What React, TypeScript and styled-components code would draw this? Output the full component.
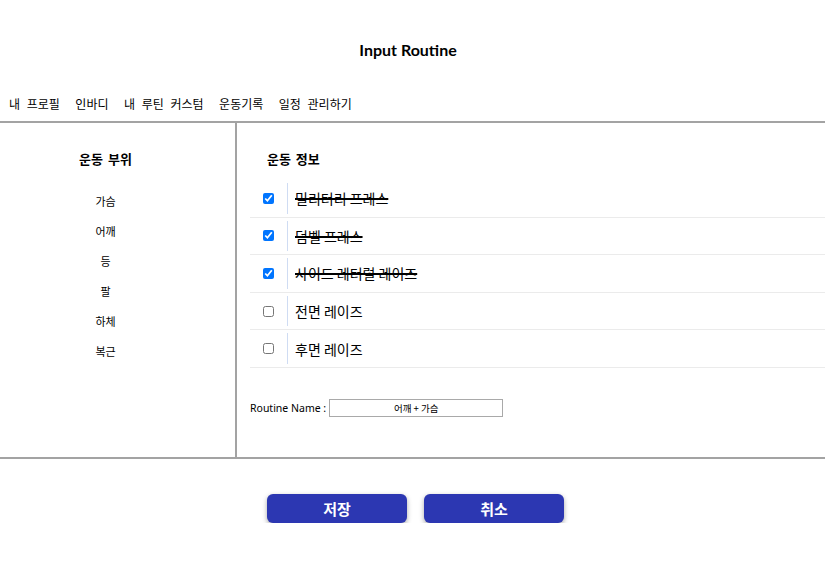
import React, { useState } from "react";
import styled, { createGlobalStyle } from "styled-components";

const Global = createGlobalStyle`
  html, body { margin: 0; padding: 0; background: #fff; }
  body { font-family: "Noto Sans CJK KR", "Noto Sans", sans-serif; color: #000; }
  * { box-sizing: border-box; }
`;

const Page = styled.div`
  width: 825px;
`;

const Title = styled.h1`
  margin: 0;
  padding-top: 40px;
  height: 60px;
  text-align: center;
  font-family: Lato, "Noto Sans", sans-serif;
  font-weight: 700;
  font-size: 16px;
  line-height: 20px;
  padding-right: 9px;
`;

const Nav = styled.nav`
  display: flex;
  gap: 15.5px;
  padding: 35px 0 9px 9px;
  font-size: 12px;
  line-height: 17px;
  word-spacing: 4px;
`;

const NavItem = styled.span`
  white-space: nowrap;
`;

const Main = styled.div`
  display: grid;
  grid-template-columns: 237px 1fr;
  border-top: 2px solid #a3a3a3;
  border-bottom: 2px solid #a3a3a3;
  height: 338px;
`;

const PartColumn = styled.div`
  border-right: 2px solid #a3a3a3;
  display: flex;
  flex-direction: column;
  align-items: center;
  padding: 27px 24px 0 0;
`;

const Heading = styled.div<{ $indent?: number }>`
  font-size: 13px;
  font-weight: 700;
  line-height: 18px;
  word-spacing: 2px;
  margin-left: ${(p) => p.$indent ?? 0}px;
`;

const PartList = styled.div`
  margin-top: 18px;
  display: flex;
  flex-direction: column;
  align-items: center;
`;

const PartItem = styled.div`
  font-size: 11px;
  line-height: 30px;
`;

const InfoColumn = styled.div`
  padding: 27px 0 0 13px;
`;

const Table = styled.div`
  margin-top: 12px;
  display: flex;
  flex-direction: column;
`;

const Row = styled.label`
  display: flex;
  align-items: stretch;
  height: 37.6px;
  border-bottom: 1px solid #ebebeb;
`;

const CheckCell = styled.div`
  width: 37px;
  display: flex;
  align-items: center;
  padding-left: 13px;
  input {
    margin: 0;
    width: 11px;
    height: 11px;
  }
`;

const NameCell = styled.div<{ $done: boolean }>`
  margin: 3px 0;
  border-left: 1px solid #cfdcf3;
  padding-left: 7px;
  display: flex;
  align-items: center;
  font-size: 14px;
  text-decoration: ${(p) => (p.$done ? "line-through" : "none")};
  text-decoration-thickness: 1.5px;
`;

const NameRow = styled.div`
  margin-top: 31px;
  display: flex;
  align-items: center;
  font-family: "Noto Sans", "Noto Sans CJK KR", sans-serif;
  font-size: 10.5px;
  gap: 3px;
`;

const NameInput = styled.input`
  width: 174px;
  height: 18px;
  border: 1px solid #a9a9a9;
  text-align: center;
  font-family: "Noto Sans CJK KR", sans-serif;
  font-size: 9.5px;
  padding: 0;
  outline: none;
`;

const Buttons = styled.div`
  display: flex;
  justify-content: center;
  gap: 17px;
  padding: 35px 0 0 6px;
`;

const Button = styled.button`
  width: 140px;
  height: 29px;
  border: none;
  border-radius: 6px;
  background: #2c37b2;
  color: #fff;
  font-family: "Noto Sans CJK KR", sans-serif;
  font-weight: 700;
  font-size: 15px;
  box-shadow: 0 2px 5px rgba(0, 0, 0, 0.35);
  cursor: pointer;
`;

const navItems = ["내 프로필", "인바디", "내 루틴 커스텀", "운동기록", "일정 관리하기"];
const parts = ["가슴", "어깨", "등", "팔", "하체", "복근"];

export default function App() {
  const [items, setItems] = useState([
    { name: "밀리터리 프레스", done: true },
    { name: "덤벨 프레스", done: true },
    { name: "사이드 레터럴 레이즈", done: true },
    { name: "전면 레이즈", done: false },
    { name: "후면 레이즈", done: false },
  ]);
  const [routine, setRoutine] = useState("어깨 + 가슴");

  return (
    <Page>
      <Global />
      <Title>Input Routine</Title>
      <Nav>
        {navItems.map((n) => (
          <NavItem key={n}>{n}</NavItem>
        ))}
      </Nav>
      <Main>
        <PartColumn>
          <Heading>운동 부위</Heading>
          <PartList>
            {parts.map((p) => (
              <PartItem key={p}>{p}</PartItem>
            ))}
          </PartList>
        </PartColumn>
        <InfoColumn>
          <Heading $indent={17}>운동 정보</Heading>
          <Table>
            {items.map((it, i) => (
              <Row key={it.name}>
                <CheckCell>
                  <input
                    type="checkbox"
                    checked={it.done}
                    onChange={() =>
                      setItems(items.map((x, j) => (j === i ? { ...x, done: !x.done } : x)))
                    }
                  />
                </CheckCell>
                <NameCell $done={it.done}>{it.name}</NameCell>
              </Row>
            ))}
          </Table>
          <NameRow>
            Routine Name :
            <NameInput value={routine} onChange={(e) => setRoutine(e.target.value)} />
          </NameRow>
        </InfoColumn>
      </Main>
      <Buttons>
        <Button>저장</Button>
        <Button>취소</Button>
      </Buttons>
    </Page>
  );
}
